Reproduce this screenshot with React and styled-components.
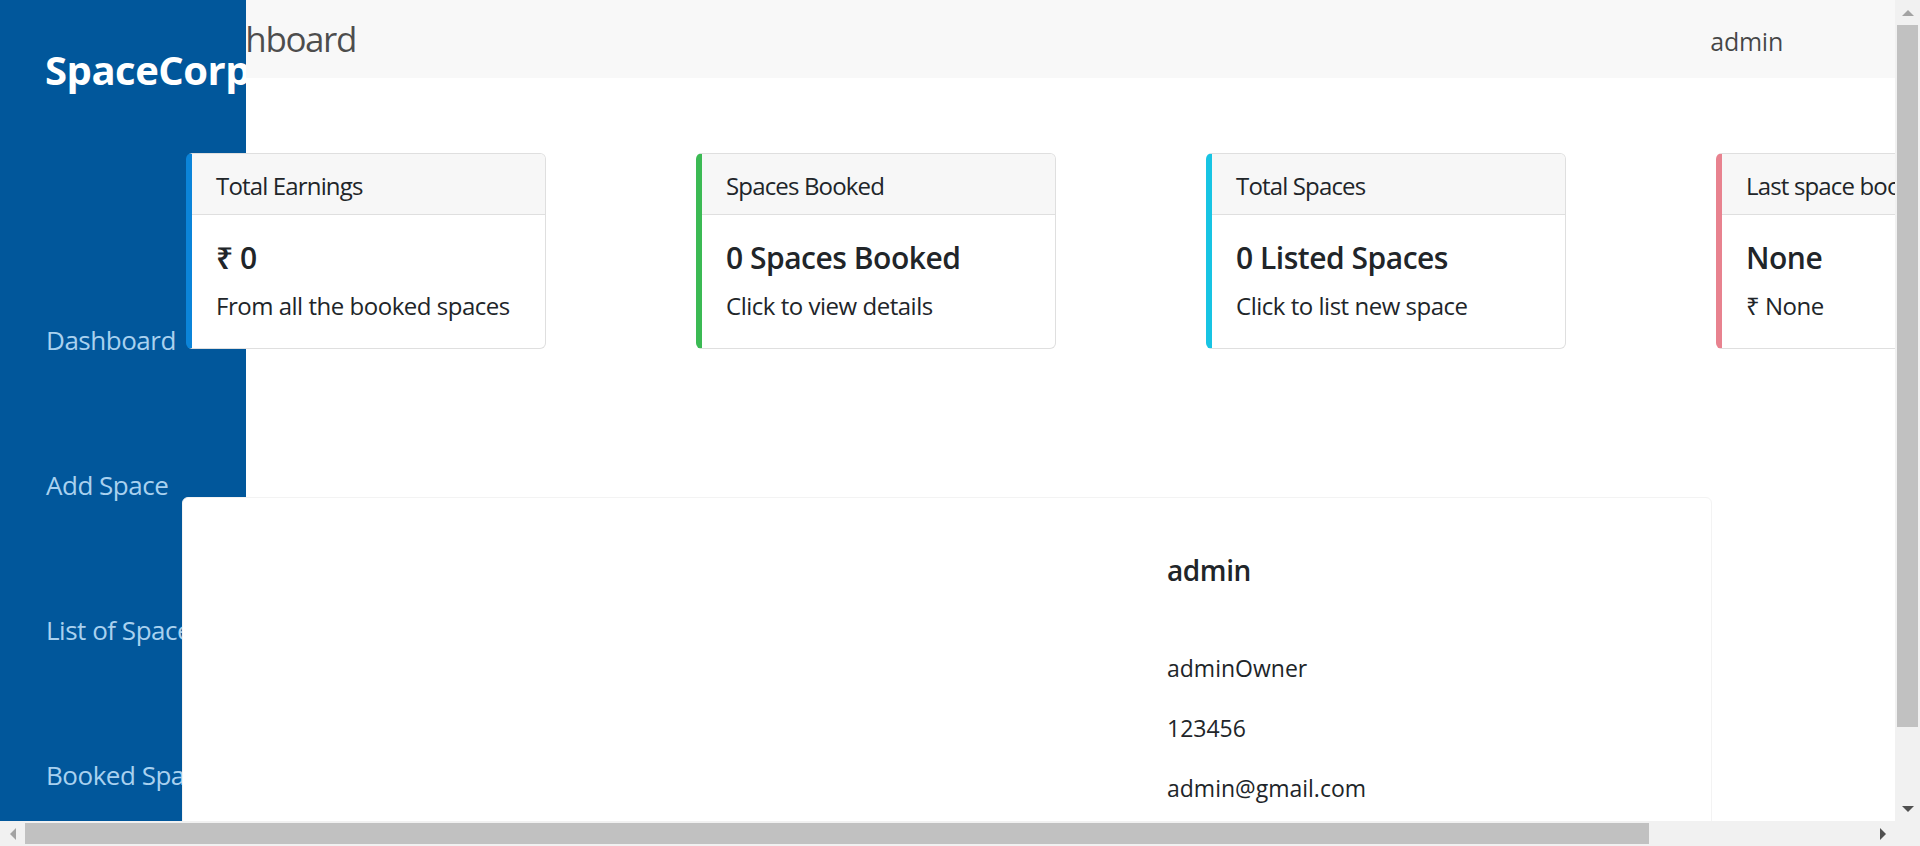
import React from "react";
import styled, { createGlobalStyle, css } from "styled-components";

const GlobalStyle = createGlobalStyle`
  html, body {
    margin: 0;
    padding: 0;
    background: #ffffff;
    overflow: hidden;
  }
  body {
    font-family: "Open Sans", "Noto Sans", "DejaVu Sans", sans-serif;
    color: #212529;
    letter-spacing: -0.03em;
  }
`;

/* ---------- window frame with classic scrollbars ---------- */

const Frame = styled.div`
  display: grid;
  grid-template-columns: 1fr 25px;
  grid-template-rows: 1fr 25px;
  width: 100vw;
  height: 100vh;
`;

const Viewport = styled.div`
  position: relative;
  overflow: hidden;
  min-width: 0;
  min-height: 0;
`;

const ScrollBar = styled.div`
  display: flex;
  flex-direction: ${(p) => (p.$vertical ? "column" : "row")};
  background: #f1f1f1;
`;

const ScrollButton = styled.div`
  flex: none;
  width: 25px;
  height: 25px;
  display: flex;
  align-items: center;
  justify-content: center;
`;

const arrowShapes = {
  up: css`
    border-left: 6px solid transparent;
    border-right: 6px solid transparent;
    border-bottom: 6px solid ${(p) => p.$color};
  `,
  down: css`
    border-left: 6px solid transparent;
    border-right: 6px solid transparent;
    border-top: 6px solid ${(p) => p.$color};
  `,
  left: css`
    border-top: 6px solid transparent;
    border-bottom: 6px solid transparent;
    border-right: 6px solid ${(p) => p.$color};
  `,
  right: css`
    border-top: 6px solid transparent;
    border-bottom: 6px solid transparent;
    border-left: 6px solid ${(p) => p.$color};
  `,
};

const Arrow = styled.span`
  width: 0;
  height: 0;
  ${(p) => arrowShapes[p.$dir]}
`;

const Track = styled.div`
  flex: 1;
  display: flex;
  flex-direction: ${(p) => (p.$vertical ? "column" : "row")};
  min-width: 0;
  min-height: 0;
`;

const Thumb = styled.div`
  flex: none;
  background: #c1c1c1;
  ${(p) =>
    p.$vertical
      ? css`
          height: ${p.$size}px;
          margin: 0 2px;
        `
      : css`
          width: ${p.$size}px;
          margin: 2px 0;
        `}
`;

const Corner = styled.div`
  background: #f1f1f1;
`;

/* ---------- sidebar ---------- */

const Sidebar = styled.aside`
  position: absolute;
  top: 0;
  left: 0;
  bottom: 0;
  width: 246px;
  box-sizing: border-box;
  padding: 46px 0 0 45px;
  background: #01579b;
  overflow: hidden;
  z-index: 1;
`;

const Brand = styled.div`
  font-size: 40px;
  font-weight: 700;
  line-height: 48px;
  color: #ffffff;
  white-space: nowrap;
`;

const NavList = styled.nav`
  display: flex;
  flex-direction: column;
  gap: 106px;
  margin-top: 227px;
  padding-left: 1px;
`;

const NavLink = styled.a`
  font-size: 26px;
  line-height: 39px;
  color: #a9d1ef;
  text-decoration: none;
  white-space: nowrap;
`;

/* ---------- main ---------- */

const Main = styled.main`
  display: block;
`;

const TopBar = styled.header`
  height: 78px;
  box-sizing: border-box;
  display: flex;
  align-items: center;
  padding: 0 112px 0 188px;
  background: #f8f8f8;
`;

const PageTitle = styled.h1`
  margin: 0;
  font-size: 35px;
  font-weight: 400;
  line-height: 1.2;
  letter-spacing: -0.04em;
  color: rgba(0, 0, 0, 0.7);
`;

const UserName = styled.span`
  margin-left: auto;
  padding-top: 3px;
  font-size: 25px;
  line-height: 36px;
  letter-spacing: -0.01em;
  color: rgba(0, 0, 0, 0.72);
`;

const StatsRow = styled.section`
  display: flex;
  gap: 150px;
  width: max-content;
  margin-top: 75px;
  padding: 0 75px 0 186px;
`;

const StatCard = styled.div`
  position: relative;
  z-index: 2;
  flex: none;
  width: 360px;
  box-sizing: border-box;
  background: #ffffff;
  border: 1px solid #dfdfdf;
  border-left: 6px solid ${(p) => p.$accent};
  border-radius: 6px;
  overflow: hidden;
`;

const CardHeader = styled.div`
  padding: 14px 24px 10px;
  font-size: 24px;
  line-height: 36px;
  letter-spacing: -0.035em;
  background: #f7f7f7;
  border-bottom: 1px solid #dfdfdf;
  white-space: nowrap;
`;

const CardBody = styled.div`
  padding: 25px 24px 24px;
`;

const CardTitle = styled.h5`
  margin: 0 0 12px;
  font-size: 30px;
  font-weight: 600;
  line-height: 36px;
  white-space: nowrap;
`;

const CardText = styled.p`
  margin: 0;
  font-size: 24px;
  line-height: 36px;
  white-space: nowrap;
`;

const ProfilePanel = styled.section`
  position: relative;
  z-index: 2;
  display: grid;
  grid-template-columns: 960px 1fr;
  width: 1530px;
  height: 381px;
  box-sizing: border-box;
  margin: 148px 0 24px 182px;
  background: #ffffff;
  border: 1px solid #f3f3f3;
  border-radius: 6px;
`;

const PhotoSlot = styled.div`
  min-height: 100%;
`;

const ProfileInfo = styled.div`
  padding: 56px 24px 0;
  letter-spacing: 0;
`;

const ProfileName = styled.h5`
  margin: 0 0 63px;
  font-size: 28px;
  font-weight: 600;
  line-height: 33.6px;
  letter-spacing: -0.015em;
  color: #212529;
`;

const ProfileDetail = styled.p`
  margin: 0 0 26px;
  font-size: 23px;
  line-height: 34px;
  color: #212529;
`;

const stats = [
  { accent: "#0b84d9", head: "Total Earnings", title: "₹ 0", text: "From all the booked spaces" },
  { accent: "#3bba54", head: "Spaces Booked", title: "0 Spaces Booked", text: "Click to view details" },
  { accent: "#18c4e3", head: "Total Spaces", title: "0 Listed Spaces", text: "Click to list new space" },
  { accent: "#e8828f", head: "Last space booked", title: "None", text: "₹ None" },
];

const navItems = ["Dashboard", "Add Space", "List of Spaces", "Booked Spaces"];

export default function App() {
  return (
    <>
      <GlobalStyle />
      <Frame>
        <Viewport>
          <Sidebar>
            <Brand>SpaceCorp</Brand>
            <NavList>
              {navItems.map((item) => (
                <NavLink key={item} href="#">
                  {item}
                </NavLink>
              ))}
            </NavList>
          </Sidebar>
          <Main>
            <TopBar>
              <PageTitle>Dashboard</PageTitle>
              <UserName>admin</UserName>
            </TopBar>
            <StatsRow>
              {stats.map((s) => (
                <StatCard key={s.head} $accent={s.accent}>
                  <CardHeader>{s.head}</CardHeader>
                  <CardBody>
                    <CardTitle>{s.title}</CardTitle>
                    <CardText>{s.text}</CardText>
                  </CardBody>
                </StatCard>
              ))}
            </StatsRow>
            <ProfilePanel>
              <PhotoSlot />
              <ProfileInfo>
                <ProfileName>admin</ProfileName>
                <ProfileDetail>adminOwner</ProfileDetail>
                <ProfileDetail>123456</ProfileDetail>
                <ProfileDetail>admin@gmail.com</ProfileDetail>
              </ProfileInfo>
            </ProfilePanel>
          </Main>
        </Viewport>
        <ScrollBar $vertical>
          <ScrollButton>
            <Arrow $dir="up" $color="#a3a3a3" />
          </ScrollButton>
          <Track $vertical>
            <Thumb $vertical $size={702} />
          </Track>
          <ScrollButton>
            <Arrow $dir="down" $color="#505050" />
          </ScrollButton>
        </ScrollBar>
        <ScrollBar>
          <ScrollButton>
            <Arrow $dir="left" $color="#a3a3a3" />
          </ScrollButton>
          <Track>
            <Thumb $size={1624} />
          </Track>
          <ScrollButton>
            <Arrow $dir="right" $color="#505050" />
          </ScrollButton>
        </ScrollBar>
        <Corner />
      </Frame>
    </>
  );
}
